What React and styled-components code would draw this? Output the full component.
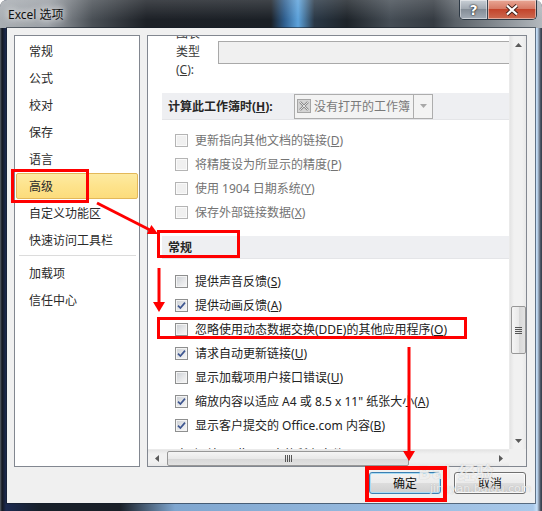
import React from 'react';
import styled, { createGlobalStyle } from 'styled-components';

const FONT = `"Noto Sans", "Noto Sans CJK SC", sans-serif`;

const Global = createGlobalStyle`
  html, body { margin: 0; padding: 0; background: #fff; }
  body { font-family: ${FONT}; font-size: 12px; }
  #root { width: 542px; height: 511px; }
`;

const Window = styled.div`
  position: relative;
  width: 542px;
  height: 511px;
  box-sizing: border-box;
  display: flex;
  flex-direction: column;
  overflow: hidden;
  border-radius: 7px 7px 0 0;
  background: linear-gradient(90deg, #5a636c 0px, #141820 2px, #1c2a50 6px, #18202a 40px, #1a2028 120px, #7fa6cf 175px, #a9c9ea 533px, #c8e0f8 537px, #3b4250 541px);
`;

const TitleBar = styled.div`
  height: 28px;
  flex: none;
  display: flex;
  align-items: flex-start;
  background:
    linear-gradient(180deg, rgba(255,255,255,0.16), rgba(255,255,255,0) 70%),
    linear-gradient(90deg, #a9aeb3 0%, #9a9fa5 9%, #4a5056 17%, #1d2127 27%, #1b2026 50%, #2f5f8f 52.5%, #5da3dc 55%, #2a3846 58%, #1e242a 64%, #454d55 72%, #353b42 80%, #5a6168 84%, #b3b8bd 100%);
`;

const Title = styled.div`
  padding-left: 8px;
  line-height: 29px;
  font-size: 12px;
  color: #101010;
  text-shadow: 0 0 6px rgba(255,255,255,0.95), 0 0 10px rgba(255,255,255,0.8);
`;

const Caption = styled.div`
  margin-left: auto;
  margin-right: 5px;
  display: flex;
  height: 20px;
  border: 1px solid #2c3844;
  border-top: none;
  border-radius: 0 0 5px 5px;
  overflow: hidden;
  box-sizing: border-box;
`;

const CapBtn = styled.div`
  height: 19px;
  width: ${p => p.$w}px;
  display: flex;
  align-items: center;
  justify-content: center;
  box-shadow: inset 0 0 0 1px rgba(255,255,255,0.45);
  background: ${p => p.$close
    ? 'linear-gradient(180deg, #e9a795 0%, #d77b66 45%, #c4452c 50%, #cd6a50 100%)'
    : 'linear-gradient(180deg, #c9cfd6 0%, #a2aab3 45%, #848d97 50%, #a3acb6 100%)'};
  & + & { border-left: 1px solid #3a4652; }
  color: #fff;
  font: bold 14px "DejaVu Sans", sans-serif;
  text-shadow: 0 0 2px #1a1a1a, 0 0 1px #000;
`;

const Client = styled.div`
  flex: 1;
  margin: 0 7px 8px 7px;
  background: #f0f0f0;
  box-shadow: 0 0 0 1px rgba(20,30,40,0.55);
  padding: 7px 8px 0 7px;
  display: flex;
  flex-direction: column;
  min-height: 0;
`;

const MainRow = styled.div`
  display: flex;
  gap: 7px;
  height: 432px;
  flex: none;
`;

const Nav = styled.div`
  width: 126px;
  flex: none;
  box-sizing: border-box;
  border: 1px solid #828790;
  background: #fff;
  padding: 2px 0;
  display: flex;
  flex-direction: column;
`;

const NavItem = styled.div`
  height: 26px;
  margin: 0 1px 1px 1px;
  box-sizing: border-box;
  padding-left: 12px;
  line-height: 26px;
  color: #2a2a2a;
  border: 1px solid ${p => (p.$active ? '#e3b859' : 'transparent')};
  border-radius: 2px;
  background: ${p => (p.$active ? 'linear-gradient(180deg, #fdeaa2 0%, #fde38c 50%, #fcdc7c 100%)' : 'transparent')};
  white-space: nowrap;
`;

const NavSep = styled.div`
  height: 1px;
  background: #dcdcdc;
  margin: 1px 3px 4px 4px;
`;

const Panel = styled.div`
  flex: 1;
  box-sizing: border-box;
  border: 1px solid #828790;
  background: #fff;
  display: grid;
  grid-template-columns: 1fr 17px;
  grid-template-rows: 1fr 17px;
  overflow: hidden;
  min-width: 0;
`;

const Viewport = styled.div`
  overflow: hidden;
  position: relative;
  min-width: 0;
`;

const Content = styled.div`
  margin-top: -11px;
  padding-left: 14px;
  display: flex;
  flex-direction: column;
`;

const FieldRow = styled.div`
  height: 54px;
  display: flex;
  align-items: center;
  padding-left: 14px;
`;

const FieldLabel = styled.div`
  width: 42px;
  flex: none;
  line-height: 18px;
  color: #3a3a3a;
`;

const FieldInput = styled.div`
  width: 320px;
  flex: none;
  height: 23px;
  box-sizing: border-box;
  border: 1px solid #a9a9a9;
  background: #f0f0f0;
`;

const Band = styled.div`
  height: ${p => p.$h}px;
  margin-top: ${p => p.$mt}px;
  background: #eeeff2;
  border-bottom: 1px solid #e4e5e8;
  box-sizing: border-box;
  display: flex;
  align-items: center;
  padding-left: 6px;
  font-weight: bold;
  color: #262626;
  white-space: nowrap;
`;

const BandLabel = styled.div`
  width: 126px;
  flex: none;
`;

const Combo = styled.div`
  width: 139px;
  height: 25px;
  box-sizing: border-box;
  border: 1px solid #adadad;
  background: #f3f3f3;
  display: flex;
  align-items: center;
  font-weight: normal;
  color: #7a7a7a;
`;

const ComboIcon = styled.span`
  width: 14px;
  height: 14px;
  margin: 0 3px 0 2px;
  display: flex;
  flex: none;
`;

const ComboText = styled.span`
  flex: 1;
  white-space: nowrap;
  overflow: hidden;
`;

const ComboDrop = styled.span`
  width: 18px;
  flex: none;
  align-self: stretch;
  border-left: 1px solid #adadad;
  display: flex;
  align-items: center;
  justify-content: center;
`;

const List = styled.div`
  margin-top: ${p => p.$mt}px;
  display: flex;
  flex-direction: column;
`;

const Row = styled.div`
  height: 24px;
  display: flex;
  align-items: center;
  gap: 7px;
  padding-left: ${p => (p.$plain ? 14 : 13)}px;
  margin-top: ${p => (p.$plain ? 5 : 0)}px;
  color: ${p => (p.$disabled ? '#737373' : '#222')};
  white-space: nowrap;
`;

const Box = styled.span`
  width: 13px;
  height: 13px;
  flex: none;
  box-sizing: border-box;
  border: 1px solid ${p => (p.$disabled ? '#b4b4b4' : '#8e8f8f')};
  box-shadow: inset 0 0 0 1px ${p => (p.$disabled ? '#fafafa' : '#f4f4f4')};
  background: ${p => (p.$disabled ? '#f0f0f0' : 'linear-gradient(135deg, #c9cdd2 0%, #e6e7e9 55%, #f8f8f8 100%)')};
  display: flex;
  align-items: center;
  justify-content: center;
`;

const VScroll = styled.div`
  display: flex;
  flex-direction: column;
  background: linear-gradient(90deg, #e4e4e4 0%, #f1f1f1 25%, #f1f1f1 75%, #e8e8e8 100%);
  border-left: 1px solid #eaeaea;
`;

const HScroll = styled.div`
  display: flex;
  align-items: stretch;
  background: linear-gradient(180deg, #e4e4e4 0%, #f1f1f1 25%, #f1f1f1 75%, #e8e8e8 100%);
  border-top: 1px solid #eaeaea;
`;

const Corner = styled.div`
  background: #f0f0f0;
`;

const Arrow = styled.div`
  width: 17px;
  height: 17px;
  flex: none;
  display: flex;
  align-items: center;
  justify-content: center;
`;

const Track = styled.div`
  flex: 1;
  display: flex;
  flex-direction: ${p => (p.$h ? 'row' : 'column')};
  min-width: 0;
  min-height: 0;
`;

const Thumb = styled.div`
  box-sizing: border-box;
  border: 1px solid #979797;
  border-radius: 2px;
  display: flex;
  align-items: center;
  justify-content: center;
  ${p => p.$h
    ? `height: 15px; margin: 1px 0 0 ${p.$off}px; width: ${p.$len}px;
       background: linear-gradient(180deg, #f5f5f5 0%, #e9e9e9 50%, #d7d7d7 51%, #e2e2e2 100%);`
    : `width: 15px; margin: ${p.$off}px 0 0 1px; height: ${p.$len}px;
       background: linear-gradient(90deg, #f5f5f5 0%, #e9e9e9 50%, #d7d7d7 51%, #e2e2e2 100%);`}
`;

const Grip = styled.div`
  display: flex;
  flex-direction: ${p => (p.$h ? 'row' : 'column')};
  gap: 1px;
  & > span {
    display: block;
    background: #555;
    ${p => (p.$h ? 'width: 1px; height: 7px;' : 'width: 7px; height: 1px;')}
  }
`;

const Footer = styled.div`
  display: flex;
  justify-content: flex-end;
  gap: 13px;
  margin-top: 5px;
  padding-right: 1px;
`;

const Button = styled.div`
  width: 72px;
  height: 22px;
  box-sizing: border-box;
  border-radius: 3px;
  border: 1px solid ${p => (p.$default ? '#3c7fb1' : '#707070')};
  box-shadow: inset 0 0 0 1px ${p => (p.$default ? '#a8dcf5' : '#fcfcfc')};
  background: linear-gradient(180deg, #f2f2f2 0%, #ebebeb 49%, #dddddd 50%, #cfcfcf 100%);
  display: flex;
  align-items: center;
  justify-content: center;
  color: #111;
`;

const Overlay = styled.svg`
  position: absolute;
  left: 0;
  top: 0;
  pointer-events: none;
`;

const Watermark = styled.div`
  position: absolute;
  left: 418px;
  top: 463px;
  display: flex;
  flex-direction: column;
  align-items: flex-start;
  color: rgba(255,255,255,0.75);
  text-shadow: 0 0 1px rgba(120,120,120,0.45);
  pointer-events: none;
  font-family: "DejaVu Sans", "Noto Sans CJK SC", sans-serif;
`;

const WmTop = styled.div`
  font-size: 17px;
  font-weight: bold;
  line-height: 20px;
  letter-spacing: 1px;
`;

const WmBottom = styled.div`
  font-size: 11px;
  line-height: 12px;
  padding-left: 12px;
`;

const Mn = ({ text, k, tail = '' }) => (
  <span>
    {text}(<u>{k}</u>){tail}
  </span>
);

const Check = () => (
  <svg width="9" height="9" viewBox="0 0 9 9">
    <path d="M1 4.6 L3.4 7 L8 1.6" fill="none" stroke="#3e5690" strokeWidth="1.7" />
  </svg>
);

const Tri = ({ dir, color = '#5a5a5a' }) => {
  const pts = {
    up: '0,4 3.5,0 7,4',
    down: '0,0 7,0 3.5,4',
    left: '4,0 4,7 0,3.5',
    right: '0,0 0,7 4,3.5',
  }[dir];
  const horiz = dir === 'left' || dir === 'right';
  return (
    <svg width={horiz ? 4 : 7} height={horiz ? 7 : 4} viewBox={horiz ? '0 0 4 7' : '0 0 7 4'}>
      <polygon points={pts} fill={color} />
    </svg>
  );
};

const navItems = ['常规', '公式', '校对', '保存', '语言', '高级', '自定义功能区', '快速访问工具栏'];
const navItems2 = ['加载项', '信任中心'];

const disabledRows = [
  { t: '更新指向其他文档的链接', k: 'D' },
  { t: '将精度设为所显示的精度', k: 'P' },
  { t: '使用 1904 日期系统', k: 'Y' },
  { t: '保存外部链接数据', k: 'X' },
];

const generalRows = [
  { t: '提供声音反馈', k: 'S', c: false },
  { t: '提供动画反馈', k: 'A', c: true },
  { t: '忽略使用动态数据交换(DDE)的其他应用程序', k: 'O', c: false },
  { t: '请求自动更新链接', k: 'U', c: true },
  { t: '显示加载项用户接口错误', k: 'U', c: false },
  { t: '缩放内容以适应 A4 或 8.5 x 11" 纸张大小', k: 'A', c: true },
  { t: '显示客户提交的 Office.com 内容', k: 'B', c: true },
];

const ExcelIcon = () => (
  <svg width="14" height="14" viewBox="0 0 14 14">
    <rect x="0.5" y="0.5" width="13" height="13" fill="#d4d4d4" stroke="#a6a6a6" />
    <path d="M3 3 L11 11 M11 3 L3 11" stroke="#8a8a8a" strokeWidth="2.4" />
    <path d="M3 3 L11 11 M11 3 L3 11" stroke="#ececec" strokeWidth="0.9" />
  </svg>
);

const Annotations = () => (
  <Overlay width="542" height="511" viewBox="0 0 542 511">
    <g fill="none" stroke="#ff0000">
      <rect x="12.5" y="170.5" width="75" height="31" strokeWidth="3" />
      <rect x="158.5" y="231.5" width="80" height="25" strokeWidth="3" />
      <rect x="158.5" y="318.5" width="307" height="19" strokeWidth="3" />
      <rect x="367" y="468" width="78" height="32" strokeWidth="4" />
      <line x1="97" y1="203" x2="150" y2="230" strokeWidth="3" />
      <line x1="159" y1="268" x2="159" y2="303" strokeWidth="3" />
      <line x1="409" y1="347" x2="409" y2="452" strokeWidth="3" />
    </g>
    <g fill="#ff0000">
      <polygon points="158,234 146.8,234 151.4,225" />
      <polygon points="153,302 165,302 159,312" />
      <polygon points="403,451 415,451 409,461" />
    </g>
  </Overlay>
);

export default function App() {
  return (
    <>
      <Global />
      <Window>
        <TitleBar>
          <Title>Excel 选项</Title>
          <Caption>
            <CapBtn $w={27}>?</CapBtn>
            <CapBtn $w={48} $close>
              <svg width="14" height="12" viewBox="0 0 14 12">
                <path d="M2 1.5 L12 10.5 M12 1.5 L2 10.5" stroke="#40201a" strokeWidth="4" />
                <path d="M2 1.5 L12 10.5 M12 1.5 L2 10.5" stroke="#fff" strokeWidth="2.2" />
              </svg>
            </CapBtn>
          </Caption>
        </TitleBar>
        <Client>
          <MainRow>
            <Nav>
              {navItems.map(n => (
                <NavItem key={n} $active={n === '高级'}>{n}</NavItem>
              ))}
              <NavSep />
              {navItems2.map(n => (
                <NavItem key={n}>{n}</NavItem>
              ))}
            </Nav>
            <Panel>
              <Viewport>
                <Content>
                  <FieldRow>
                    <FieldLabel>
                      图表<br />类型<br />(<u>C</u>):
                    </FieldLabel>
                    <FieldInput />
                  </FieldRow>
                  <Band $h={27} $mt={14}>
                    <BandLabel>
                      <Mn text="计算此工作簿时" k="H" tail=":" />
                    </BandLabel>
                    <Combo>
                      <ComboIcon><ExcelIcon /></ComboIcon>
                      <ComboText>没有打开的工作簿</ComboText>
                      <ComboDrop><Tri dir="down" color="#a8a8a8" /></ComboDrop>
                    </Combo>
                  </Band>
                  <List $mt={8}>
                    {disabledRows.map(r => (
                      <Row key={r.t} $disabled>
                        <Box $disabled />
                        <Mn text={r.t} k={r.k} />
                      </Row>
                    ))}
                  </List>
                  <Band $h={23} $mt={12}>常规</Band>
                  <List $mt={10}>
                    {generalRows.map((r, i) => (
                      <Row key={i}>
                        <Box>{r.c && <Check />}</Box>
                        <Mn text={r.t} k={r.k} />
                      </Row>
                    ))}
                    <Row $plain>
                      <Mn text="启动时打开此目录中的所有文件" k="L" tail=":" />
                    </Row>
                  </List>
                </Content>
              </Viewport>
              <VScroll>
                <Arrow><Tri dir="up" /></Arrow>
                <Track>
                  <Thumb $off={253} $len={48}>
                    <Grip><span /><span /><span /><span /></Grip>
                  </Thumb>
                </Track>
                <Arrow><Tri dir="down" /></Arrow>
              </VScroll>
              <HScroll>
                <Arrow><Tri dir="left" /></Arrow>
                <Track $h>
                  <Thumb $h $off={2} $len={242}>
                    <Grip $h><span /><span /><span /><span /></Grip>
                  </Thumb>
                </Track>
                <Arrow><Tri dir="right" /></Arrow>
              </HScroll>
              <Corner />
            </Panel>
          </MainRow>
          <Footer>
            <Button $default>确定</Button>
            <Button>取消</Button>
          </Footer>
        </Client>
        <Watermark>
          <WmTop>Bai 经验</WmTop>
          <WmBottom>jingyan.baidu.com</WmBottom>
        </Watermark>
        <Annotations />
      </Window>
    </>
  );
}
